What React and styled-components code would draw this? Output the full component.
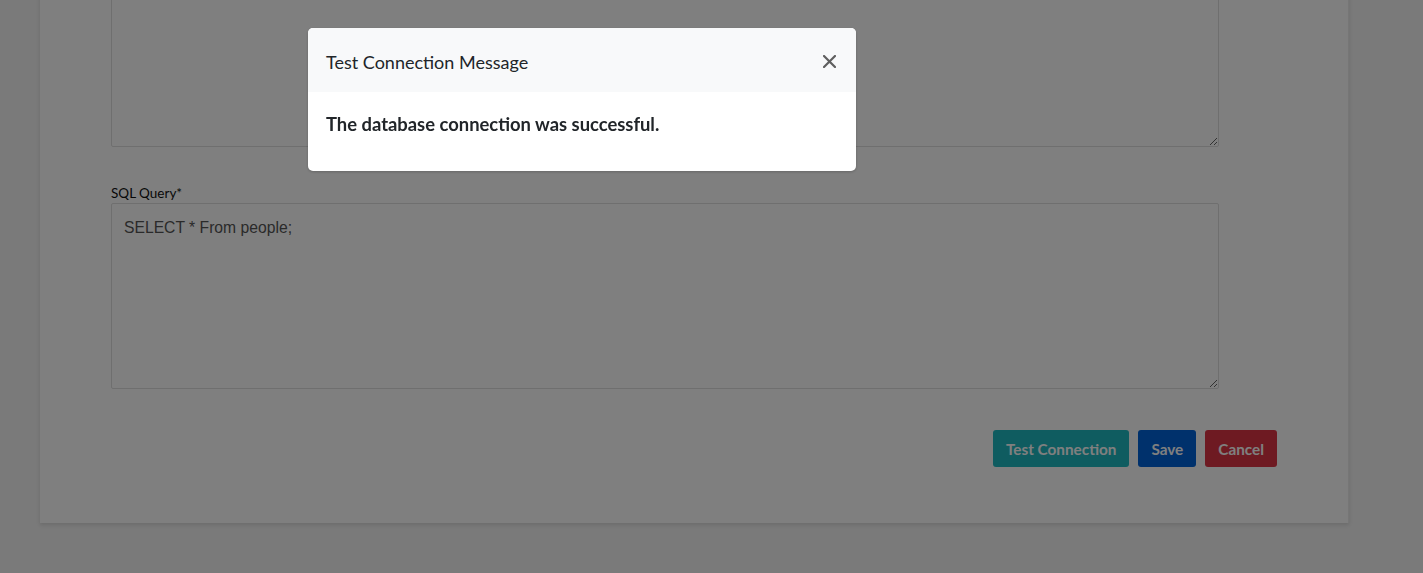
import React from "react";
import styled, { createGlobalStyle } from "styled-components";

const Global = createGlobalStyle`
  html, body { margin: 0; padding: 0; }
  body {
    background: #f4f4f4;
    font-family: Lato, "Open Sans", sans-serif;
    color: #212529;
    overflow: hidden;
  }
`;

const Page = styled.div`
  padding: 0 74px 50px 40px;
`;

const Card = styled.div`
  margin-top: -59px;
  background: #ffffff;
  box-shadow: 0 2px 4px rgba(0, 0, 0, 0.12);
  border-right: 1px solid #ececec;
  padding: 20px 71px 56px 71px;
`;

const Field = styled.div`
  display: flex;
  flex-direction: column;
  margin-bottom: ${(p) => p.$mb || 36}px;
`;

const Label = styled.label`
  font-family: Lato, sans-serif;
  font-size: 13.5px;
  line-height: 16px;
  margin-bottom: 2px;
  color: #111;
`;

const TextArea = styled.textarea`
  width: 1108px;
  height: 186px;
  box-sizing: border-box;
  border: 1px solid #dedede;
  border-radius: 2px;
  padding: 15px 12px 12px;
  font-family: "Liberation Sans", Arial, sans-serif;
  font-size: 15.7px;
  color: #555;
  background: #fff;
  outline: none;
`;

const Actions = styled.div`
  display: flex;
  justify-content: flex-end;
  gap: 9px;
`;

const Button = styled.button`
  height: 37px;
  padding: 0 13px;
  border: none;
  border-radius: 3px;
  font-family: Lato, sans-serif;
  font-weight: 700;
  font-size: 15.3px;
  color: #fff;
  background: ${(p) => p.$bg};
  cursor: pointer;
`;

const Overlay = styled.div`
  position: fixed;
  inset: 0;
  background: rgba(0, 0, 0, 0.5);
`;

const Modal = styled.div`
  position: fixed;
  left: 308px;
  top: 28px;
  width: 548px;
  background: #fff;
  border-radius: 5px;
  overflow: hidden;
  box-shadow: 0 1px 3px rgba(0, 0, 0, 0.2);
`;

const Header = styled.div`
  height: 64px;
  background: #f8f9fa;
  display: flex;
  align-items: center;
  justify-content: space-between;
  padding: 0 18px;
`;

const Title = styled.div`
  font-family: Lato, sans-serif;
  font-size: 18px;
  color: #212529;
  margin-top: 4px;
`;

const Close = styled.button`
  border: none;
  background: transparent;
  padding: 0;
  width: 20px;
  height: 20px;
  display: flex;
  align-items: center;
  justify-content: center;
  cursor: pointer;
  margin-right: -1px;
  margin-top: 2px;
`;

const Body = styled.div`
  padding: 21px 18px 36px;
  font-family: Lato, sans-serif;
  font-weight: 700;
  font-size: 18.4px;
  line-height: 22px;
  color: #212529;
`;

export default function App() {
  return (
    <>
      <Global />
      <Page>
        <Card>
          <Field $mb={38}>
            <TextArea defaultValue="" />
          </Field>
          <Field $mb={41}>
            <Label>SQL Query*</Label>
            <TextArea defaultValue="SELECT * From people;" />
          </Field>
          <Actions>
            <Button $bg="#1eb9c1">Test Connection</Button>
            <Button $bg="#0062d8">Save</Button>
            <Button $bg="#dc3545">Cancel</Button>
          </Actions>
        </Card>
      </Page>
      <Overlay />
      <Modal>
        <Header>
          <Title>Test Connection Message</Title>
          <Close aria-label="Close">
            <svg width="13" height="13" viewBox="0 0 13 13">
              <path d="M1 1 L12 12 M12 1 L1 12" stroke="#5f5f5f" strokeWidth="2.2" strokeLinecap="round" />
            </svg>
          </Close>
        </Header>
        <Body>The database connection was successful.</Body>
      </Modal>
    </>
  );
}
